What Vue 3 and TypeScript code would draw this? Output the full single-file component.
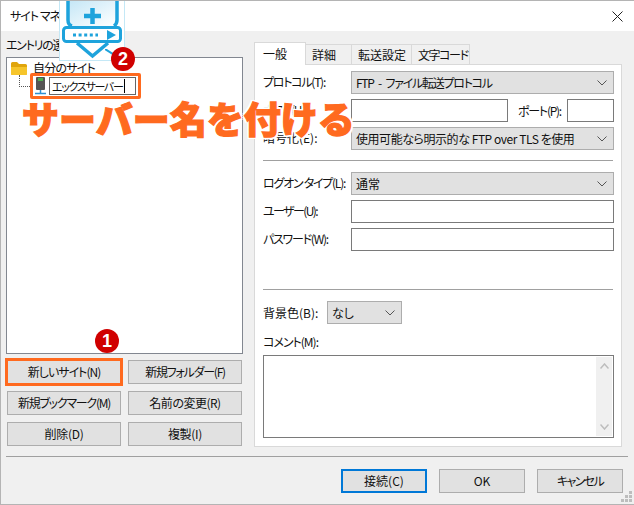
<script setup lang="ts">
const buttons: { label: string; fit: string; highlighted?: boolean }[] = [
  { label: '新しいサイト(N)', fit: 'fit-m', highlighted: true },
  { label: '新規フォルダー(F)', fit: 'fit-l' },
  { label: '新規ブックマーク(M)', fit: 'fit-l' },
  { label: '名前の変更(R)', fit: 'fit-s' },
  { label: '削除(D)', fit: 'fit-xs' },
  { label: '複製(I)', fit: 'fit-xs' },
]
const tabs = ['一般', '詳細', '転送設定', '文字コード']
const grip = [[8, 0], [4, 4], [8, 4], [0, 8], [4, 8], [8, 8]]
</script>

<template>
  <div class="window">
    <header class="titlebar">
      <span class="title fit-m">サイト マネージャー</span>
      <svg class="close" width="11" height="11" viewBox="0 0 11 11"><path d="M.5.5l10 10M10.5.5l-10 10" stroke="#222" fill="none" /></svg>
    </header>

    <div class="content">
      <div class="main">
        <section class="left">
          <div class="entry-label fit-l">エントリの選択(S):</div>
          <div class="tree">
            <div class="tree-root">
              <svg width="16" height="13" viewBox="0 0 16 13"><path d="M0 1.500Q0 0 1.500 0H6l2 2h6.500Q16 2 16 3.500v8q0 1.500-1.500 1.500h-13Q0 13 0 11.500z" fill="#e0a50c" /><path d="M0 5h16v6.500q0 1.500-1.500 1.500h-13Q0 13 0 11.500z" fill="#f6c52b" /></svg>
              <span class="root-name">自分のサイト</span>
            </div>
            <div class="tree-child">
              <span class="connector"></span>
              <div class="name-mark">
                <svg width="13" height="18" viewBox="0 0 13 18"><rect x="2" y="0" width="9" height="13" rx="1" fill="#555" /><rect x="4" y="1" width="5" height="3" fill="#4caf50" /><path d="M6.500 13v3M1 16.500h11" stroke="#2f8fd0" stroke-width="1.500" fill="none" /></svg>
                <div class="name-edit"><span class="name-text">エックスサーバー</span><i class="caret"></i></div>
              </div>
            </div>
          </div>
          <div class="site-buttons">
            <button v-for="b in buttons" :key="b.label" class="btn" :class="[b.fit, { marked: b.highlighted }]">{{ b.label }}</button>
          </div>
        </section>

        <section class="right">
          <nav class="tabs">
            <span v-for="(t, i) in tabs" :key="t" class="tab" :class="['tab-' + i, { active: i === 0 }]">{{ t }}</span>
          </nav>
          <div class="panel">
            <div class="row">
              <label class="lbl fit-l">プロトコル(T):</label>
              <div class="select grow"><span class="proto">FTP - ファイル転送プロトコル</span><svg class="chev" width="10" height="6" viewBox="0 0 10 6"><path d="M.5.500L5 5 9.500.500" stroke="#555" fill="none" /></svg></div>
            </div>
            <div class="row">
              <label class="lbl fit-l">ホスト(H):</label>
              <div class="input host"></div>
              <label class="port-lbl fit-l">ポート(P):</label>
              <div class="input port"></div>
            </div>
            <div class="row">
              <label class="lbl">暗号化(E):</label>
              <div class="select grow"><span class="enc">使用可能なら明示的な FTP over TLS を使用</span><svg class="chev" width="10" height="6" viewBox="0 0 10 6"><path d="M.5.500L5 5 9.500.500" stroke="#555" fill="none" /></svg></div>
            </div>
            <hr class="sep sep-a" />
            <div class="row">
              <label class="lbl fit-l">ログオン タイプ(L):</label>
              <div class="select grow">通常<svg class="chev" width="10" height="6" viewBox="0 0 10 6"><path d="M.5.500L5 5 9.500.500" stroke="#555" fill="none" /></svg></div>
            </div>
            <div class="row">
              <label class="lbl fit-xl">ユーザー(U):</label>
              <div class="input grow"></div>
            </div>
            <div class="row">
              <label class="lbl fit-l">パスワード(W):</label>
              <div class="input grow"></div>
            </div>
            <hr class="sep sep-b" />
            <div class="row">
              <label class="lbl-bg">背景色(B):</label>
              <div class="select color">なし<svg class="chev" width="10" height="6" viewBox="0 0 10 6"><path d="M.5.500L5 5 9.500.500" stroke="#555" fill="none" /></svg></div>
            </div>
            <div class="comment-lbl fit-m">コメント(M):</div>
            <div class="comment">
              <div class="scroll">
                <svg width="9" height="6" viewBox="0 0 9 6"><path d="M.5 5.500L4.500 1l4 4.500" stroke="#bdbdbd" stroke-width="1.500" fill="none" /></svg>
                <svg width="9" height="6" viewBox="0 0 9 6"><path d="M.5.500L4.500 5l4-4.500" stroke="#bdbdbd" stroke-width="1.500" fill="none" /></svg>
              </div>
            </div>
          </div>
        </section>
      </div>

      <hr class="footer-sep" />
      <footer class="footer">
        <button class="btn foot primary">接続(C)</button>
        <button class="btn foot">OK</button>
        <button class="btn foot fit-xl">キャンセル</button>
      </footer>
    </div>

    <svg class="grip" width="11" height="11" viewBox="0 0 11 11"><rect v-for="(g, i) in grip" :key="i" :x="g[0]" :y="g[1]" width="3" height="3" fill="#bdbdbd" /></svg>

    <div class="logo">
      <svg width="64" height="60" viewBox="0 0 64 60">
        <defs>
          <linearGradient id="shieldFill" x1="0" y1="0" x2="1" y2="1">
            <stop offset="0" stop-color="#c3e6f6" />
            <stop offset="1" stop-color="#fff" />
          </linearGradient>
        </defs>
        <path d="M8 0h48v26H8z" fill="url(#shieldFill)" />
        <path d="M8 0v20q0 5 4 6M57 0v20q0 4-3 6" stroke="#1ea3dc" stroke-width="3.500" fill="none" />
        <path d="M24 16h17M32.500 8v16" stroke="#1ea3dc" stroke-width="4.500" fill="none" />
        <rect x="3.500" y="27.500" width="57" height="14" rx="3" fill="#fff" stroke="#1ea3dc" stroke-width="3" />
        <path d="M13 35h25" stroke="#1ea3dc" stroke-width="3" stroke-dasharray="3 2.600" fill="none" />
        <path d="M47 30l9 5-9 5z" fill="#1ea3dc" />
        <path d="M17 43l15.500 13L48 43" stroke="#1ea3dc" stroke-width="3.500" fill="none" />
      </svg>
    </div>
    <svg class="lead" width="14" height="10" viewBox="0 0 14 10"><path d="M0 0l14 9" stroke="#1ea3dc" stroke-width="2" /></svg>
    <span class="badge badge-two">2</span>
    <span class="badge badge-one">1</span>
    <div class="headline">サーバー名を付ける</div>
  </div>
</template>

<style>
html, body { margin: 0; background: #f0f0f0; }
</style>

<style scoped>
.window {
  position: relative;
  width: 634px;
  height: 505px;
  box-sizing: border-box;
  display: flex;
  flex-direction: column;
  overflow: hidden;
  background: #f0f0f0;
  border: 1px solid #b4b4b4;
  border-right: 0;
  color: #111;
  font: 12px/16px "Noto Sans CJK JP", sans-serif;
  font-feature-settings: "palt";
}
.fit-xs { letter-spacing: -0.3px; }
.fit-s { letter-spacing: -0.5px; }
.fit-m { letter-spacing: -1px; }
.fit-l { letter-spacing: -1.25px; }
.fit-xl { letter-spacing: -1.6px; }
.proto { letter-spacing: -1.25px; word-spacing: 3px; }
.enc { letter-spacing: -0.45px; }
.titlebar {
  height: 30px;
  flex: none;
  display: flex;
  align-items: center;
  justify-content: space-between;
  padding: 0 11px 0 9px;
  background: #fff;
}
.content { flex: 1; display: flex; flex-direction: column; padding: 0 6px 0 5px; min-height: 0; }
.main { height: 415px; display: flex; flex: none; }
.left { width: 237px; flex: none; }
.entry-label { height: 26px; padding-top: 6px; box-sizing: border-box; white-space: nowrap; }
.tree {
  height: 297px;
  box-sizing: border-box;
  border: 1px solid #828790;
  background: #fff;
  padding: 3px 4px;
}
.tree-root { display: flex; align-items: center; gap: 6px; height: 14px; }
.root-name { letter-spacing: -0.8px; }
.tree-child { display: flex; align-items: flex-start; margin-top: -2px; }
.connector {
  width: 10px;
  height: 11px;
  margin: 2px 0 0 8px;
  flex: none;
  border-left: 1px dotted #555;
  border-bottom: 1px dotted #555;
}
.name-mark {
  display: flex;
  align-items: center;
  gap: 2px;
  height: 26px;
  width: 111px;
  box-sizing: border-box;
  padding-left: 1px;
  border: 3px solid #ff6a1f;
  border-radius: 2px;
  background: #fff;
}
.name-mark svg { flex: none; }
.name-edit {
  width: 87px;
  height: 18px;
  flex: none;
  box-sizing: border-box;
  border: 1px solid #666;
  padding-left: 2px;
  white-space: nowrap;
  overflow: hidden;
  display: flex;
  align-items: center;
}
.name-text { font-size: 11px; letter-spacing: -1.3px; }
.caret { display: inline-block; width: 1px; height: 14px; margin-left: 1px; background: #000; flex: none; }
.site-buttons {
  display: grid;
  grid-template-columns: 114px 114px;
  grid-auto-rows: 24px;
  gap: 7px;
  margin: 6px 0 0 1px;
}
.btn {
  box-sizing: border-box;
  padding: 0;
  border: 1px solid #adadad;
  background: #e1e1e1;
  color: #111;
  font-family: inherit;
  font-size: inherit;
  line-height: inherit;
  font-feature-settings: inherit;
}
.marked { box-shadow: 0 0 0 2px #ff6a1f; border-color: #ff6a1f; }
.right { margin-left: 11px; width: 368px; flex: none; padding-top: 11px; }
.tabs { display: flex; align-items: flex-end; height: 23px; margin-bottom: -1px; position: relative; z-index: 1; }
.tab {
  box-sizing: border-box;
  height: 21px;
  display: flex;
  align-items: center;
  padding-left: 6px;
  border: 1px solid #d9d9d9;
  border-bottom: 0;
  border-left: 0;
  white-space: nowrap;
}
.tab.active { height: 23px; padding-left: 8px; background: #fff; border-left: 1px solid #d9d9d9; letter-spacing: 0; }
.tab-0 { width: 52px; }
.tab-1 { width: 46px; }
.tab-2 { width: 60px; }
.tab-3 { width: 58px; letter-spacing: -1.4px; }
.panel {
  height: 383px;
  box-sizing: border-box;
  background: #fff;
  border: 1px solid #d9d9d9;
  padding: 6px 7px 0 8px;
}
.row { display: flex; align-items: center; height: 23px; margin-bottom: 5px; }
.row .lbl { width: 88px; flex: none; margin-top: -2px; white-space: nowrap; }
.lbl-bg { width: 64px; flex: none; white-space: nowrap; }
.select {
  box-sizing: border-box;
  height: 23px;
  display: flex;
  align-items: center;
  justify-content: space-between;
  padding: 0 5px 0 4px;
  background: #e1e1e1;
  border: 1px solid #adadad;
}
.chev { flex: none; margin-right: 1px; }
.input { box-sizing: border-box; height: 23px; background: #fff; border: 1px solid #7a7a7a; }
.grow { flex: 1; }
.host { width: 157px; flex: none; }
.port-lbl { width: 59px; flex: none; padding-left: 10px; box-sizing: border-box; white-space: nowrap; }
.port { width: 47px; flex: none; }
.color { width: 75px; flex: none; }
.sep { border: 0; height: 1px; background: #a0a0a0; margin: 0; width: 350px; }
.sep-a { margin: 10px 0 11px; }
.sep-b { margin: 38px 0 11px; }
.comment-lbl { margin-top: 10px; height: 16px; }
.comment {
  box-sizing: border-box;
  height: 83px;
  margin-top: 5px;
  display: flex;
  justify-content: flex-end;
  padding: 1px;
  background: #fff;
  border: 1px solid #7a7a7a;
}
.scroll {
  width: 16px;
  display: flex;
  flex-direction: column;
  align-items: center;
  justify-content: space-between;
  padding: 6px 0;
  box-sizing: border-box;
  background: #f0f0f0;
}
.footer-sep { border: 0; height: 1px; background: #a0a0a0; margin: 10px 0 0; width: 622px; flex: none; }
.footer { display: flex; gap: 12px; margin: 12px 5px 0 0; justify-content: flex-end; }
.foot { width: 86px; height: 24px; }
.primary { border: 2px solid #0078d7; }
.grip { position: absolute; right: 2px; bottom: 2px; }
.logo {
  position: absolute;
  left: 59px;
  top: -1px;
  width: 64px;
  height: 60px;
  background: #fff;
  box-sizing: border-box;
  outline: 1px solid #c4e8f6;
}
.logo svg { display: block; }
.lead { position: absolute; left: 104px; top: 48px; }
.badge {
  position: absolute;
  width: 24px;
  height: 24px;
  border-radius: 50%;
  background: #d00000;
  color: #fff;
  font: 700 18px/24px "Liberation Sans", sans-serif;
  text-align: center;
}
.badge-two { left: 110px; top: 46px; }
.badge-one { left: 94px; top: 328px; }
.headline {
  position: absolute;
  left: 21px;
  top: 94px;
  font: 900 37px/46px "Noto Sans CJK JP", sans-serif;
  font-feature-settings: normal;
  white-space: nowrap;
  color: #ff6a1f;
  -webkit-text-stroke: 1.2px #ff6a1f;
  text-shadow: 2px 0 #fff, -2px 0 #fff, 0 2px #fff, 0 -2px #fff, 2px 2px #fff, -2px 2px #fff, 2px -2px #fff, -2px -2px #fff;
}
</style>
